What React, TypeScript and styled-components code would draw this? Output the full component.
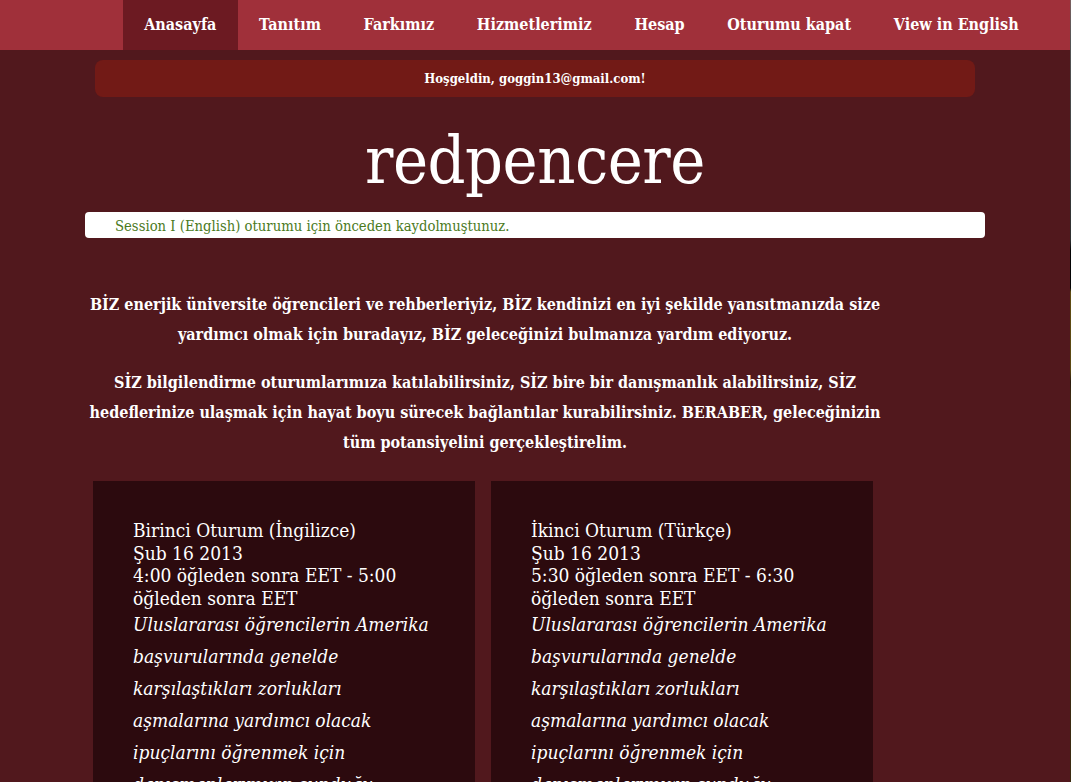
import React from "react";
import styled, { createGlobalStyle } from "styled-components";

const Global = createGlobalStyle`
  html, body { margin: 0; padding: 0; }
  body {
    background: #51181d;
    font-family: "DejaVu Serif Condensed", "DejaVu Serif", serif;
    color: #ffffff;
    overflow: hidden;
  }
`;

const Page = styled.div`
  width: 1071px;
  min-height: 782px;
  background: #51181d;
  display: grid;
  grid-template-columns: 1070px 1px;
`;

const Content = styled.div`
  min-width: 0;
`;

const Edge = styled.div`
  height: 782px;
  background: linear-gradient(
    to bottom,
    #7a6060 0px,
    #555555 40px,
    #2e3030 240px,
    #050505 250px,
    #050505 288px,
    #5e4c14 292px,
    #5a4812 370px,
    #2a1a0c 382px,
    #3c2a10 395px,
    #3a2a10 782px
  );
`;

const NavBar = styled.nav`
  height: 50px;
  background: #a0303a;
  display: flex;
  justify-content: flex-end;
  padding-right: 30px;
`;

const NavItem = styled.a<{ $active?: boolean }>`
  display: flex;
  align-items: center;
  padding: 0 21.35px 2px;
  font-size: 16px;
  font-weight: bold;
  color: #fff;
  text-decoration: none;
  background: ${(p) => (p.$active ? "#6c1a22" : "transparent")};
`;

const Main = styled.main`
  width: 900px;
  margin-left: 85px;
  display: flex;
  flex-direction: column;
`;

const Welcome = styled.div`
  margin: 10px 10px 0;
  height: 37px;
  border-radius: 8px;
  background: #721a16;
  display: flex;
  align-items: center;
  justify-content: center;
  font-size: 13px;
  font-weight: bold;
`;

const Title = styled.h1`
  margin: 24px 0 0;
  text-align: center;
  font-size: 66px;
  font-weight: normal;
  line-height: 80px;
  letter-spacing: -0.5px;
`;

const Alert = styled.div`
  margin-top: 11px;
  height: 26px;
  background: #fff;
  border-radius: 4px;
  color: #4b7a1c;
  font-size: 14.7px;
  display: flex;
  align-items: center;
  padding-left: 30px;
`;

const Intro = styled.section`
  width: 800px;
  margin-top: 52px;
  text-align: center;
  font-size: 16px;
  font-weight: bold;
  line-height: 30px;
`;

const Para = styled.p`
  margin: 0 0 18px;
`;

const Cards = styled.section`
  width: 800px;
  margin-top: 5px;
  display: grid;
  grid-template-columns: 382px 382px;
  column-gap: 16px;
  padding-left: 8px;
`;

const Card = styled.article`
  background: #2c0a0e;
  padding: 38px 42px 0 40px;
  height: 320px;
`;

const CardHead = styled.div`
  font-size: 19px;
  line-height: 22.5px;
`;

const CardBody = styled.div`
  font-size: 19px;
  font-style: italic;
  line-height: 32px;
  margin-top: -1px;
`;

const sessions = [
  {
    title: "Birinci Oturum (İngilizce)",
    time: "4:00 öğleden sonra EET - 5:00 öğleden sonra EET",
  },
  {
    title: "İkinci Oturum (Türkçe)",
    time: "5:30 öğleden sonra EET - 6:30 öğleden sonra EET",
  },
];

export default function App() {
  const nav = [
    "Anasayfa",
    "Tanıtım",
    "Farkımız",
    "Hizmetlerimiz",
    "Hesap",
    "Oturumu kapat",
    "View in English",
  ];
  return (
    <Page>
      <Global />
      <Content>
        <NavBar>
          {nav.map((n, i) => (
            <NavItem key={n} href="#" $active={i === 0}>
              {n}
            </NavItem>
          ))}
        </NavBar>
        <Main>
          <Welcome>Hoşgeldin, goggin13@gmail.com!</Welcome>
          <Title>redpencere</Title>
          <Alert>Session I (English) oturumu için önceden kaydolmuştunuz.</Alert>
          <Intro>
            <Para>
              BİZ enerjik üniversite öğrencileri ve rehberleriyiz, BİZ kendinizi en iyi şekilde
              yansıtmanızda size yardımcı olmak için buradayız, BİZ geleceğinizi bulmanıza yardım
              ediyoruz.
            </Para>
            <Para>
              SİZ bilgilendirme oturumlarımıza katılabilirsiniz, SİZ bire bir danışmanlık
              alabilirsiniz, SİZ hedeflerinize ulaşmak için hayat boyu sürecek bağlantılar
              kurabilirsiniz. BERABER, geleceğinizin tüm potansiyelini gerçekleştirelim.
            </Para>
          </Intro>
          <Cards>
            {sessions.map((s) => (
              <Card key={s.title}>
                <CardHead>
                  {s.title}
                  <br />
                  Şub 16 2013
                  <br />
                  {s.time}
                </CardHead>
                <CardBody>
                  Uluslararası öğrencilerin Amerika başvurularında genelde karşılaştıkları
                  zorlukları aşmalarına yardımcı olacak ipuçlarını öğrenmek için
                  danışmanlarımızın sunduğu
                </CardBody>
              </Card>
            ))}
          </Cards>
        </Main>
      </Content>
      <Edge />
    </Page>
  );
}
